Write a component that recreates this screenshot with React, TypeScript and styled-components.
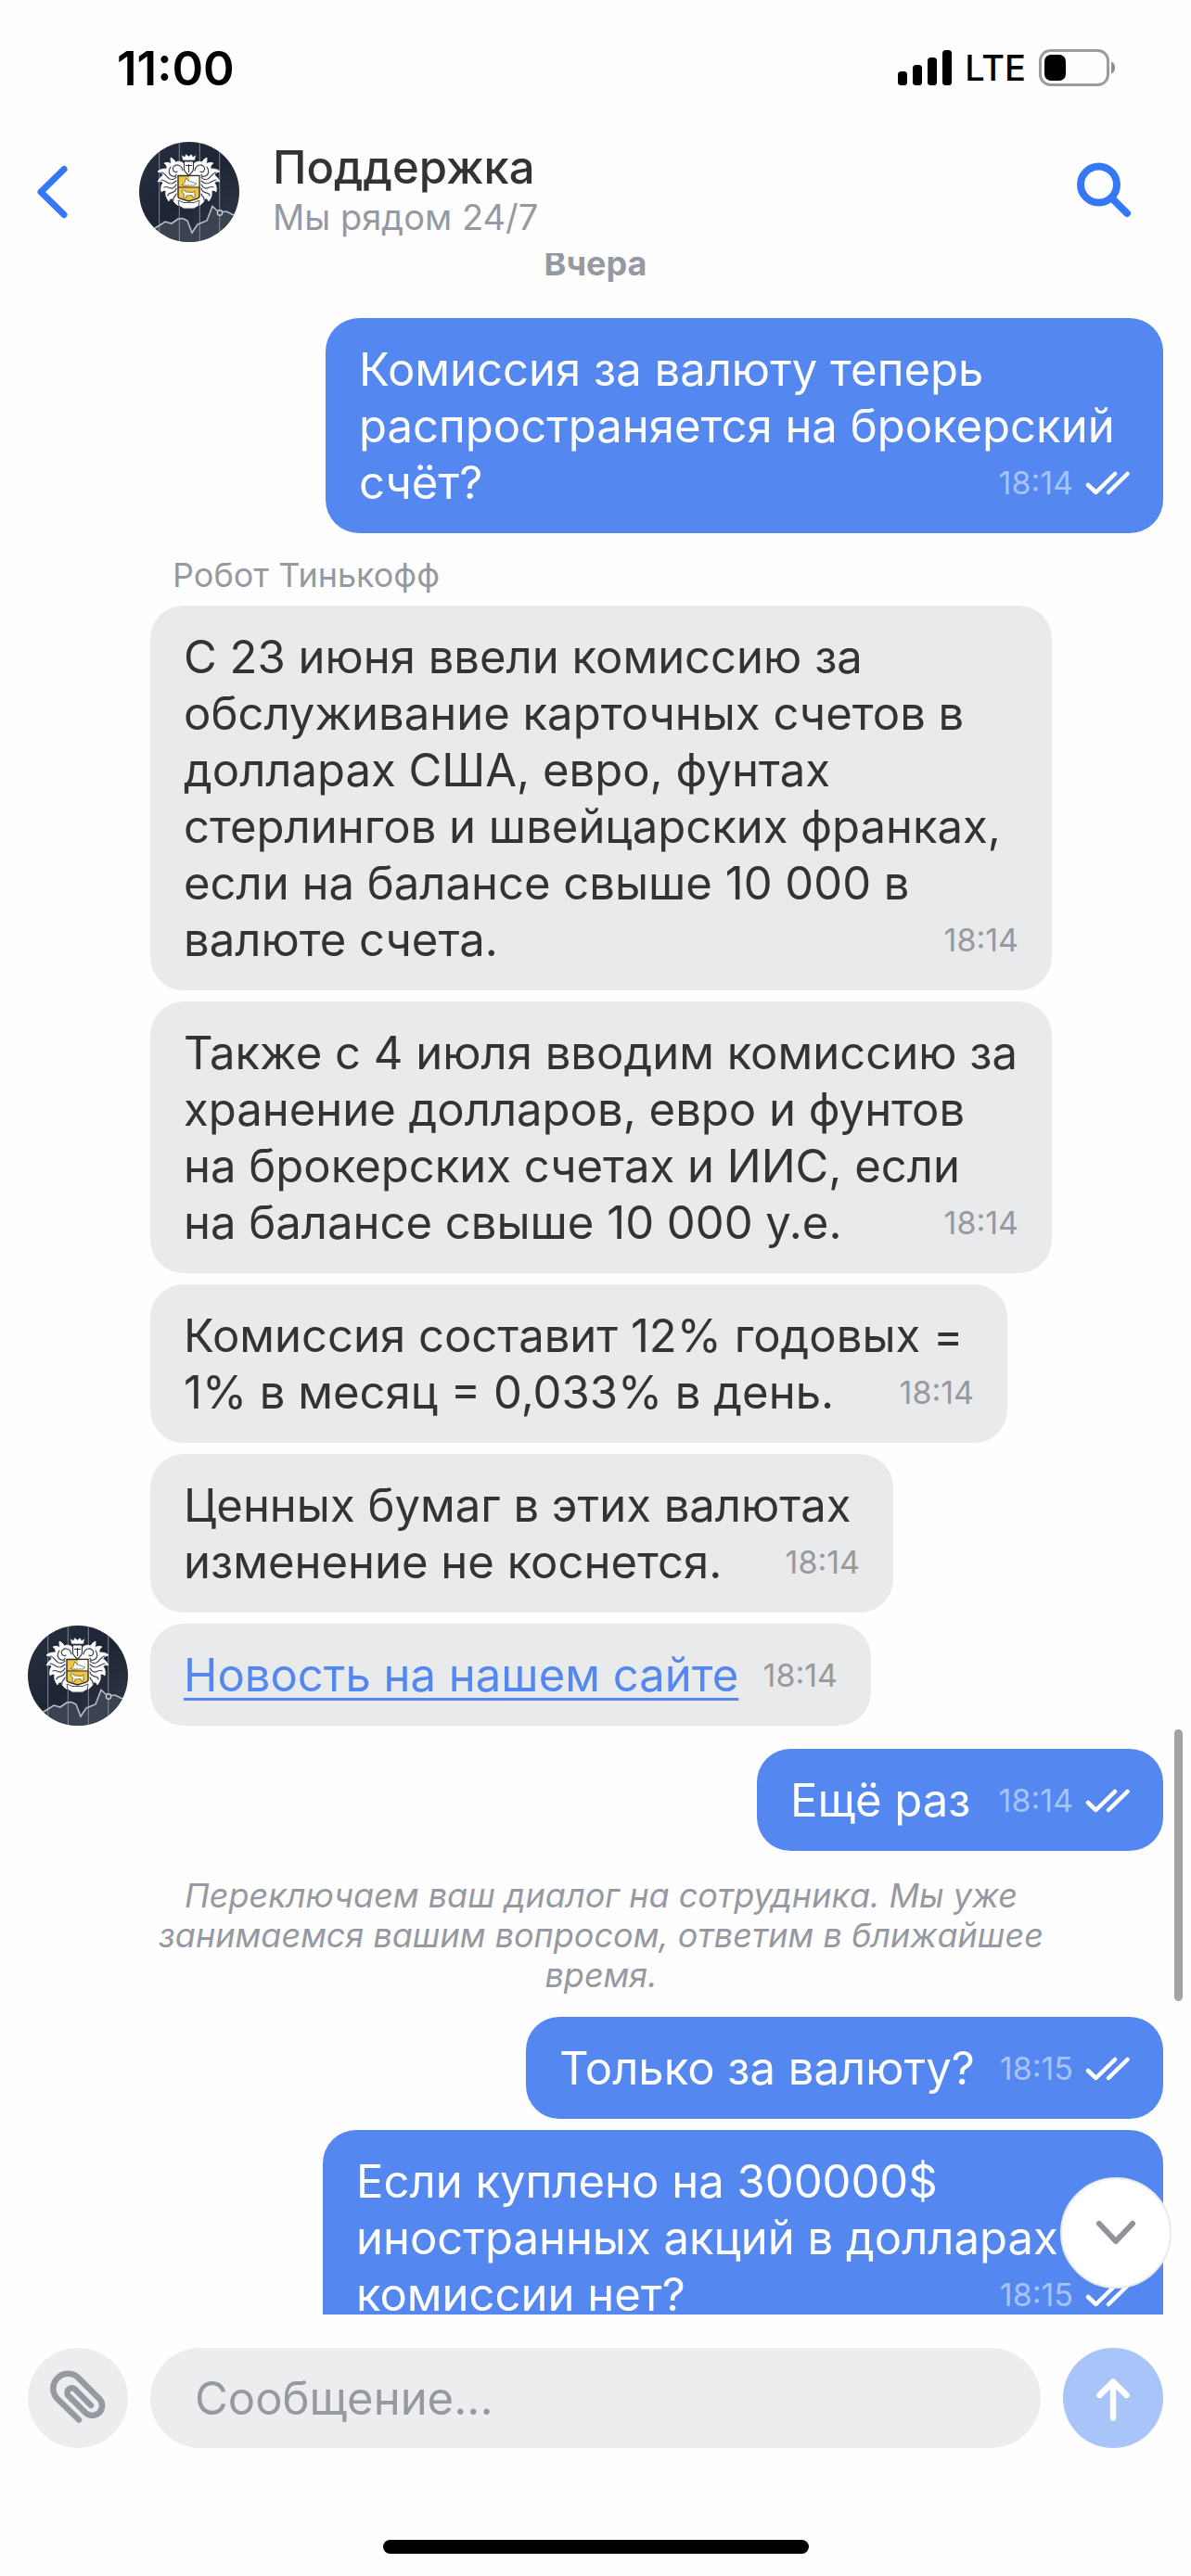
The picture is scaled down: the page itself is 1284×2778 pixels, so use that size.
import React from "react";
import styled, { createGlobalStyle } from "styled-components";

const color = {
  blue: "#5488f0",
  accent: "#3478f6",
  bubble: "#e9eaec",
  field: "#ebedee",
  ink: "#333333",
  muted: "#9699a1",
  send: "#a8c4f8",
};

const GlobalStyle = createGlobalStyle`
  * { box-sizing: border-box; }
  body {
    margin: 0;
    background: #fefefe;
    color: ${color.ink};
    font-family: Inter, "Liberation Sans", sans-serif;
  }
  button { border: 0; padding: 0; background: none; cursor: pointer; }
  svg { display: block; }
`;

const Screen = styled.div`
  display: flex;
  flex-direction: column;
  height: 100vh;
  overflow: hidden;
`;

const StatusBar = styled.div`
  display: flex;
  flex: none;
  align-items: center;
  justify-content: space-between;
  height: 146px;
  padding: 0 81px 0 126px;
  color: #000;
`;

const Clock = styled.time`
  font-size: 51px;
  font-weight: 600;
`;

const StatusIcons = styled.div`
  display: flex;
  align-items: center;
  gap: 14px;
  font-size: 38px;
  font-weight: 500;
`;

const Header = styled.header`
  display: flex;
  flex: none;
  align-items: center;
  height: 127px;
  padding: 0 60px 5px 30px;
`;

const BackButton = styled.button`
  width: 120px;
  padding-left: 8px;
`;

const SearchButton = styled.button`
  margin-left: auto;
`;

const Contact = styled.div`
  padding-left: 36px;
`;

const Title = styled.h1`
  margin: 0;
  font-size: 49px;
  font-weight: 500;
  line-height: 54px;
`;

const Subtitle = styled.p`
  margin: 0;
  font-size: 38px;
  line-height: 52px;
  color: ${color.muted};
`;

const ChatArea = styled.div`
  position: relative;
  flex: 1;
  min-height: 0;
`;

const Messages = styled.main`
  height: 100%;
  padding: 0 30px;
  overflow: hidden;
`;

const DateLabel = styled.p`
  margin: -11px 0 37px;
  font-size: 36px;
  font-weight: 700;
  line-height: 44px;
  text-align: center;
  color: ${color.muted};
`;

const SenderName = styled.p`
  margin: 23px 0 11px 156px;
  font-size: 36px;
  line-height: 44px;
  color: ${color.muted};
`;

const Incoming = styled.section`
  display: flex;
  align-items: flex-end;
  gap: 24px;
  margin-bottom: 25px;
`;

const Stack = styled.div<{ $side: "start" | "end" }>`
  display: flex;
  flex-direction: column;
  align-items: flex-${(p) => p.$side};
  gap: 12px;
`;

const BubbleBox = styled.div<{ $own?: boolean; $width: number }>`
  width: ${(p) => p.$width}px;
  max-width: 100%;
  padding: 25px 36px 24px;
  border-radius: 36px;
  background: ${(p) => (p.$own ? color.blue : color.bubble)};
  color: ${(p) => (p.$own ? "#fff" : color.ink)};
  font-size: 49px;
  line-height: 61px;
  white-space: nowrap;
`;

const Meta = styled.span<{ $own?: boolean }>`
  display: flex;
  float: right;
  align-items: center;
  gap: 13px;
  height: 61px;
  font-size: 34px;
  line-height: 66px;
  color: ${(p) => (p.$own ? "#a6c3fa" : "#98999d")};
`;

const NewsLink = styled.a`
  color: ${color.blue};
  text-decoration: underline;
  text-decoration-thickness: 3px;
  text-underline-offset: 7px;
`;

const SystemNote = styled.p`
  max-width: 972px;
  margin: 27px 0 23px 132px;
  font-size: 36px;
  font-style: italic;
  line-height: 43px;
  text-align: center;
  color: ${color.muted};
`;

const ScrollThumb = styled.div`
  position: absolute;
  top: 1592px;
  right: 9px;
  width: 9px;
  height: 293px;
  border-radius: 5px;
  background: #a3a3a4;
`;

const ScrollDown = styled.button`
  position: absolute;
  right: 21px;
  bottom: 28px;
  display: grid;
  place-items: center;
  width: 120px;
  height: 120px;
  border: 2px solid #e8eaec;
  border-radius: 50%;
  background: #fff;
`;

const Composer = styled.form`
  display: flex;
  flex: none;
  gap: 24px;
  padding: 36px 30px 0;
`;

const RoundButton = styled.button<{ $fill: string }>`
  flex: none;
  width: 108px;
  height: 108px;
  border-radius: 50%;
  background: ${(p) => p.$fill};
`;

const MessageInput = styled.input`
  flex: 1;
  min-width: 0;
  height: 108px;
  padding: 0 48px;
  border: 0;
  border-radius: 54px;
  background: ${color.field};
  color: ${color.ink};
  font: 400 49px Inter, "Liberation Sans", sans-serif;
  &::placeholder { color: ${color.muted}; opacity: 1; }
`;

const HomeIndicator = styled.div`
  flex: none;
  align-self: center;
  width: 459px;
  height: 15px;
  margin: 99px 0 24px;
  border-radius: 8px;
  background: #000;
`;

const mantle =
  "M50 26C48 22 43 20 39 22C38 19 36 18 34 17C34 20 34 22 35 24C32 22 29 22 27 23C30 25 30 27 30 29C27 29 23 29 20 32C24 33 25 34 26 36C24 37 22 39 20 43C23 42 25 43 26 44C24 46 23 50 24 54C26 52 28 52 29 53C28 56 29 60 32 64C33 61 35 61 36 61C37 65 40 68 44 69L54 70V26Z";

function Avatar({ id }: { id: string }) {
  return (
    <svg width="108" height="108" viewBox="0 0 108 108" role="img" aria-label="Тинькофф">
      <defs>
        <clipPath id={id}><circle cx="54" cy="54" r="54" /></clipPath>
        <linearGradient id={id + "g"} x1="0" y1="0" x2="1" y2="1">
          <stop offset="0" stopColor="#282f3f" />
          <stop offset="0.5" stopColor="#1d2535" />
          <stop offset="1" stopColor="#333a47" />
        </linearGradient>
      </defs>
      <g clipPath={`url(#${id})`}>
        <rect width="108" height="108" fill={`url(#${id}g)`} />
        <path d="M10 97 22 90 28 86 35 88 42 83 47 82.500 52 85 57 98 63 89 73 85 79 69.500 85 75 94 75 108 82V108H10Z" fill="#3b4350" />
        <path d="M21.700 0V108M43.300 0V108M65.300 0V108M86.700 0V108" stroke="#8c939f" strokeWidth="0.900" />
        <path d="M10 97 22 90 28 86 35 88 42 83 47 82.500 52 85 57 98 63 89 73 85 79 69.500 85 75" fill="none" stroke="#b9bdc6" strokeWidth="1.600" />
        <path d="M90 75.500 94 75 108 82" fill="none" stroke="#b9bdc6" strokeWidth="1.600" />
        <circle cx="87" cy="76.500" r="2.700" fill="#3b4350" stroke="#c9ccd2" strokeWidth="1.400" />
        {[undefined, "matrix(-1 0 0 1 107 0)"].map((t, i) => (
          <g key={i} transform={t}>
            <path d={mantle} fill="#fff" stroke="#fff" strokeWidth="0.800" strokeLinejoin="round" />
            <path
              d="M47 31C46 25 40 23 37 27C35 30 38 34 41 32M34 27C31 31 32 36 36 37C38 38 40 37 40 35M24 33C28 33 29 38 33 40C36 41 39 40 40 38M24 41C28 41 30 45 34 45C37 45 39 43 40 42M27 49C30 47 33 51 36 50C38 49 39 48 40 46M31 58C31 54 35 56 37 54C39 53 40 51 40 50M37 63C36 59 39 60 40 56"
              fill="none"
              stroke="#3a414e"
              strokeWidth="1.200"
              strokeLinecap="round"
            />
          </g>
        ))}
        <path d="M47 20 45.500 14 49 16 50.500 13 53.500 15.500 56.500 13 58 16 61.500 14 60 20Z" fill="#fff" stroke="#3a414e" strokeWidth="0.700" />
        <path d="M48.500 21H58.500V29C58.500 32 56 34 53.500 36 51 34 48.500 32 48.500 29Z" fill="#fff" stroke="#2b313d" strokeWidth="1.100" />
        <path d="M50 25.500H53M54 25.500H57M53.500 24V33" stroke="#2b313d" strokeWidth="1" />
        <path d="M42 36.500H65V59C65 61.500 60 61.500 53.500 64 47 61.500 42 61.500 42 59Z" fill="#f0c63c" stroke="#2b2b26" strokeWidth="1.400" />
        <path d="M54 37.200H64.300V48.500H54Z" fill="#fff" />
        <path d="M42 49H65" stroke="#2b2b26" strokeWidth="1.200" />
        <path d="M46 46C50 46 49 41 51 39L53 42 56 43 62 45 60 47H47Z" fill="#fff" stroke="#55503a" strokeWidth="0.700" />
        <path d="M46 53 48 51.500 50 54 58 54.500 60 53V60H58L57 57.500 51 58 50 61H48L48.500 57Z" fill="#fff" stroke="#55503a" strokeWidth="0.700" />
        <path d="M42 63 48 65.500H59L65 63 64 69 59 72H48L43 69Z" fill="#fff" stroke="#3a414e" strokeWidth="0.900" />
      </g>
    </svg>
  );
}

const Checks = () => (
  <svg width="48" height="26" viewBox="0 0 48 26" fill="none" stroke="#fff" strokeWidth="4.500" strokeLinecap="round" strokeLinejoin="round" aria-label="Прочитано">
    <path d="M3 15 11.500 23 32 3M25 23 45.500 3" />
  </svg>
);

interface BubbleProps {
  lines: React.ReactNode[];
  time: string;
  width: number;
  own?: boolean;
}

function Bubble({ lines, time, width, own }: BubbleProps) {
  return (
    <BubbleBox $own={own} $width={width}>
      {lines.map((line, i) => (
        <React.Fragment key={i}>
          {i > 0 && <br />}
          {line}
        </React.Fragment>
      ))}
      <Meta $own={own}>
        <time>{time}</time>
        {own && <Checks />}
      </Meta>
    </BubbleBox>
  );
}

export default function App() {
  return (
    <Screen>
      <GlobalStyle />
      <StatusBar>
        <Clock>11:00</Clock>
        <StatusIcons>
          <svg width="58" height="38" viewBox="0 0 58 38" aria-hidden="true">
            <rect y="23" width="10" height="15" rx="3.500" />
            <rect x="16" y="16" width="10" height="22" rx="3.500" />
            <rect x="32" y="8" width="10" height="30" rx="3.500" />
            <rect x="48" width="10" height="38" rx="3.500" />
          </svg>
          LTE
          <svg width="83" height="40" viewBox="0 0 83 40" aria-hidden="true">
            <rect x="1.500" y="1.500" width="73" height="37" rx="11" fill="none" stroke="#9b9b9b" strokeWidth="3" />
            <rect x="6" y="6" width="23" height="28" rx="7" />
            <path d="M78 13.500C83.500 15.500 83.500 24.500 78 26.500Z" fill="#8e8e8e" />
          </svg>
        </StatusIcons>
      </StatusBar>

      <Header>
        <BackButton type="button" aria-label="Назад">
          <svg width="38" height="60" viewBox="0 0 38 60" fill="none" stroke={color.accent} strokeWidth="7" strokeLinecap="round" strokeLinejoin="round">
            <path d="M31 5.500 6 30 31 54.500" />
          </svg>
        </BackButton>
        <Avatar id="contact" />
        <Contact>
          <Title>Поддержка</Title>
          <Subtitle>Мы рядом 24/7</Subtitle>
        </Contact>
        <SearchButton type="button" aria-label="Поиск">
          <svg width="64" height="64" viewBox="0 0 64 64" fill="none" stroke={color.accent} strokeWidth="8" strokeLinecap="round">
            <circle cx="24.500" cy="24" r="19.500" />
            <path d="M39 39 55 55" />
          </svg>
        </SearchButton>
      </Header>

      <ChatArea>
        <Messages>
          <DateLabel>Вчера</DateLabel>
          <Stack $side="end">
            <Bubble own width={903} time="18:14" lines={["Комиссия за валюту теперь", "распространяется на брокерский", "счёт?"]} />
          </Stack>

          <SenderName>Робот Тинькофф</SenderName>
          <Incoming>
            <Avatar id="robot" />
            <Stack $side="start">
              <Bubble
                width={972}
                time="18:14"
                lines={[
                  "С 23 июня ввели комиссию за",
                  "обслуживание карточных счетов в",
                  "долларах США, евро, фунтах",
                  "стерлингов и швейцарских франках,",
                  "если на балансе свыше 10 000 в",
                  "валюте счета.",
                ]}
              />
              <Bubble
                width={972}
                time="18:14"
                lines={[
                  "Также с 4 июля вводим комиссию за",
                  "хранение долларов, евро и фунтов",
                  "на брокерских счетах и ИИС, если",
                  "на балансе свыше 10 000 у.е.",
                ]}
              />
              <Bubble width={924} time="18:14" lines={["Комиссия составит 12% годовых =", "1% в месяц = 0,033% в день."]} />
              <Bubble width={801} time="18:14" lines={["Ценных бумаг в этих валютах", "изменение не коснется."]} />
              <Bubble width={777} time="18:14" lines={[<NewsLink key="news" href="#news">Новость на нашем сайте</NewsLink>]} />
            </Stack>
          </Incoming>

          <Stack $side="end">
            <Bubble own width={438} time="18:14" lines={["Ещё раз"]} />
          </Stack>
          <SystemNote>
            Переключаем ваш диалог на сотрудника. Мы уже занимаемся вашим вопросом, ответим в ближайшее время.
          </SystemNote>
          <Stack $side="end">
            <Bubble own width={687} time="18:15" lines={["Только за валюту?"]} />
            <Bubble own width={906} time="18:15" lines={["Если куплено на 300000$", "иностранных акций в долларах", "комиссии нет?"]} />
          </Stack>
        </Messages>
        <ScrollThumb />
        <ScrollDown type="button" aria-label="Вниз">
          <svg width="48" height="30" viewBox="0 0 48 30" fill="none" stroke="#919399" strokeWidth="6" strokeLinecap="round" strokeLinejoin="round">
            <path d="M6 5 24 24 42 5" />
          </svg>
        </ScrollDown>
      </ChatArea>

      <Composer>
        <RoundButton type="button" $fill={color.field} aria-label="Прикрепить файл">
          <svg width="108" height="108" viewBox="0 0 108 108" fill="none" stroke={color.muted} strokeWidth="6.500" strokeLinecap="round">
            <path d="M55 77.500 31.500 54.500A16 16 0 0 1 54.100 31.900L77 54.800A10.600 10.600 0 0 1 62 69.800L43.500 51.300A5 5 0 0 1 50.500 44.300L68 62" />
          </svg>
        </RoundButton>
        <MessageInput type="text" placeholder="Сообщение..." aria-label="Сообщение" />
        <RoundButton type="submit" $fill={color.send} aria-label="Отправить">
          <svg width="108" height="108" viewBox="0 0 108 108" fill="none" stroke="#fff" strokeWidth="6.500" strokeLinecap="round" strokeLinejoin="round">
            <path d="M54 75.500V37M39.500 51 54 36.500 68.500 51" />
          </svg>
        </RoundButton>
      </Composer>
      <HomeIndicator />
    </Screen>
  );
}
